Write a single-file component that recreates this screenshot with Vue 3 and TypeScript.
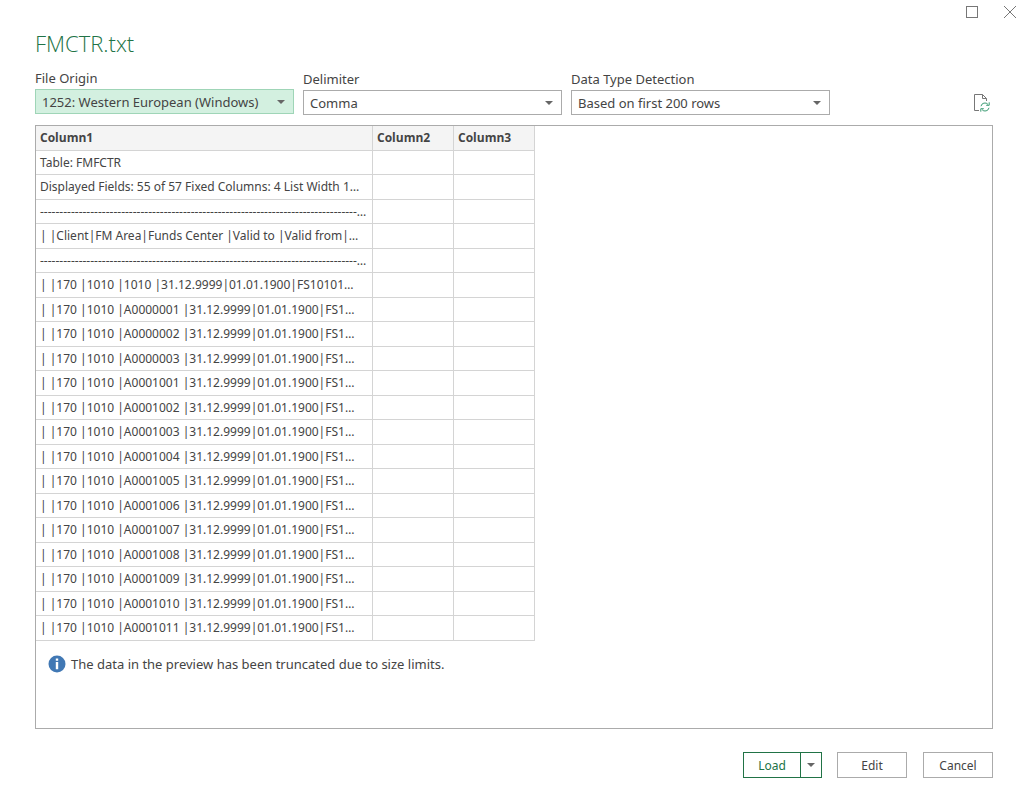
<script setup lang="ts">
import { ref } from 'vue'

interface Setting {
  id: string
  label: string
  options: string[]
  active: boolean
}

const settings: Setting[] = [
  { id: 'origin', label: 'File Origin', options: ['1252: Western European (Windows)'], active: true },
  { id: 'delimiter', label: 'Delimiter', options: ['Comma'], active: false },
  { id: 'detection', label: 'Data Type Detection', options: ['Based on first 200 rows'], active: false },
]

const values = ref<string[]>(settings.map((s) => s.options[0]))

const columns: string[] = ['Column1', 'Column2', 'Column3']
const rule = '-'.repeat(82) + '…'
const centers: string[] = [
  'A0000001', 'A0000002', 'A0000003', 'A0001001', 'A0001002', 'A0001003', 'A0001004',
  'A0001005', 'A0001006', 'A0001007', 'A0001008', 'A0001009', 'A0001010', 'A0001011',
]
const rows: string[] = [
  'Table: FMFCTR',
  'Displayed Fields: 55 of 57 Fixed Columns: 4 List Width 1…',
  rule,
  '| |Client|FM Area|Funds Center |Valid to |Valid from|…',
  rule,
  '| |170 |1010 |1010 |31.12.9999|01.01.1900|FS10101…',
  ...centers.map((c) => `| |170 |1010 |${c} |31.12.9999|01.01.1900|FS1…`),
]
</script>

<template>
  <main class="dialog">
    <div class="window-controls">
      <button type="button" class="icon-button" aria-label="Maximize">
        <svg width="14" height="14" viewBox="0 0 14 14"><rect x="1.5" y="1.5" width="11" height="11" /></svg>
      </button>
      <button type="button" class="icon-button" aria-label="Close">
        <svg width="14" height="14" viewBox="0 0 14 14"><path d="M1 1L13 13M13 1L1 13" /></svg>
      </button>
    </div>

    <h1>FMCTR.txt</h1>

    <div class="settings">
      <div v-for="(s, i) in settings" :key="s.id" class="field" :class="{ active: s.active }">
        <label :for="s.id">{{ s.label }}</label>
        <div class="select-box">
          <select :id="s.id" v-model="values[i]">
            <option v-for="o in s.options" :key="o">{{ o }}</option>
          </select>
          <svg class="caret" width="8" height="4" viewBox="0 0 8 4"><path d="M0 0H8L4 4Z" /></svg>
        </div>
      </div>
      <button type="button" class="icon-button refresh" aria-label="Refresh preview">
        <svg width="18" height="20" viewBox="0 0 18 20">
          <path d="M6 17.5H1.5V1.5H9.5L13.5 5.5V8M9.5 1.5V5.5H13.5" />
          <g class="arrows">
            <path d="M8 13.2A4 4 0 0 1 15 11.4M16.2 9.3V12.3H13.2" />
            <path d="M16 14.8A4 4 0 0 1 9 16.6M7.8 18.7V15.7H10.8" />
          </g>
        </svg>
      </button>
    </div>

    <section class="preview">
      <table>
        <thead>
          <tr>
            <th v-for="c in columns" :key="c" scope="col">{{ c }}</th>
          </tr>
        </thead>
        <tbody>
          <tr v-for="(r, i) in rows" :key="i">
            <td>{{ r }}</td>
            <td></td>
            <td></td>
          </tr>
        </tbody>
      </table>
      <p class="notice">
        <svg width="18" height="18" viewBox="0 0 18 18">
          <circle cx="9" cy="9" r="8.5" />
          <path d="M7.8 3.5H10.2V5.7H7.8ZM7.8 7H10.2V14.2H7.8Z" />
        </svg>
        <span>The data in the preview has been truncated due to size limits.</span>
      </p>
    </section>

    <footer>
      <div class="split">
        <button type="button" class="load">Load</button>
        <button type="button" class="more" aria-label="More load options">
          <svg class="caret" width="8" height="4" viewBox="0 0 8 4"><path d="M0 0H8L4 4Z" /></svg>
        </button>
      </div>
      <button type="button" class="plain">Edit</button>
      <button type="button" class="plain cancel">Cancel</button>
    </footer>
  </main>
</template>

<style>
body {
  margin: 0;
  background: #fff;
}
</style>

<style scoped>
.dialog {
  box-sizing: border-box;
  min-height: 100vh;
  padding: 4px 31px 34px 35px;
  display: flex;
  flex-direction: column;
  font-family: "Noto Sans", "Open Sans", sans-serif;
  font-size: 13px;
  color: #444;
}
button {
  font: inherit;
  color: inherit;
  background: none;
  border: 0;
  padding: 0;
}
svg {
  display: block;
}
.window-controls {
  display: flex;
  justify-content: flex-end;
  gap: 24px;
  margin-right: -24px;
}
.icon-button svg {
  fill: none;
  stroke: #777;
}
.window-controls .icon-button {
  height: 16px;
}
h1 {
  margin: 7px 0 10px;
  font-family: "Open Sans", sans-serif;
  font-size: 22px;
  line-height: 32px;
  font-weight: 300;
  color: #217346;
}
.settings {
  display: flex;
  gap: 9px;
  align-items: flex-end;
}
.field {
  flex: 0 1 259px;
}
.field label {
  display: block;
  line-height: 18px;
  margin-bottom: 2px;
}
.field.active {
  padding-bottom: 1px;
}
.select-box {
  position: relative;
}
select {
  appearance: none;
  display: block;
  width: 100%;
  height: 25px;
  padding: 0 24px 0 6px;
  border: 1px solid #ababab;
  border-radius: 0;
  background: #fff;
  font: inherit;
  color: inherit;
}
.active select {
  background: #d3f0e0;
  border-color: #9fd5b7;
}
.caret {
  fill: #666;
}
.select-box .caret {
  position: absolute;
  right: 9px;
  top: 11px;
  pointer-events: none;
}
.refresh {
  margin-left: auto;
  margin-right: 2px;
  margin-bottom: 2px;
}
.refresh .arrows {
  stroke: #3c9c74;
}
.preview {
  flex: 1;
  margin-top: 10px;
  border: 1px solid #ababab;
}
table {
  border-collapse: separate;
  border-spacing: 0;
  table-layout: fixed;
  width: 499px;
}
th,
td {
  box-sizing: border-box;
  height: 24px;
  padding: 0 0 0 4px;
  border-right: 1px solid #d4d4d4;
  border-bottom: 1px solid #d4d4d4;
  font-size: 12px;
  line-height: 22px;
  text-align: left;
  white-space: nowrap;
  overflow: hidden;
}
th {
  height: 25px;
  width: 81px;
  background: #f4f4f4;
  font-family: "Open Sans", sans-serif;
  font-weight: 700;
}
th:first-child {
  width: 337px;
}
tbody tr:nth-child(even) td {
  height: 25px;
}
.notice {
  display: flex;
  align-items: center;
  gap: 5px;
  margin: 13px 0 0 12px;
  line-height: 20px;
}
.notice circle {
  fill: #4178b4;
}
.notice path {
  fill: #fff;
}
footer {
  display: flex;
  justify-content: flex-end;
  gap: 15px;
  margin-top: 23px;
  font-size: 12px;
}
.split {
  display: flex;
  border: 1px solid #217346;
}
.load {
  width: 56px;
  color: #217346;
}
.more {
  display: flex;
  align-items: center;
  justify-content: center;
  width: 21px;
  border-left: 1px solid #217346;
}
.plain {
  width: 70px;
  height: 26px;
  border: 1px solid #ababab;
}
.cancel {
  margin-left: 1px;
}
</style>
